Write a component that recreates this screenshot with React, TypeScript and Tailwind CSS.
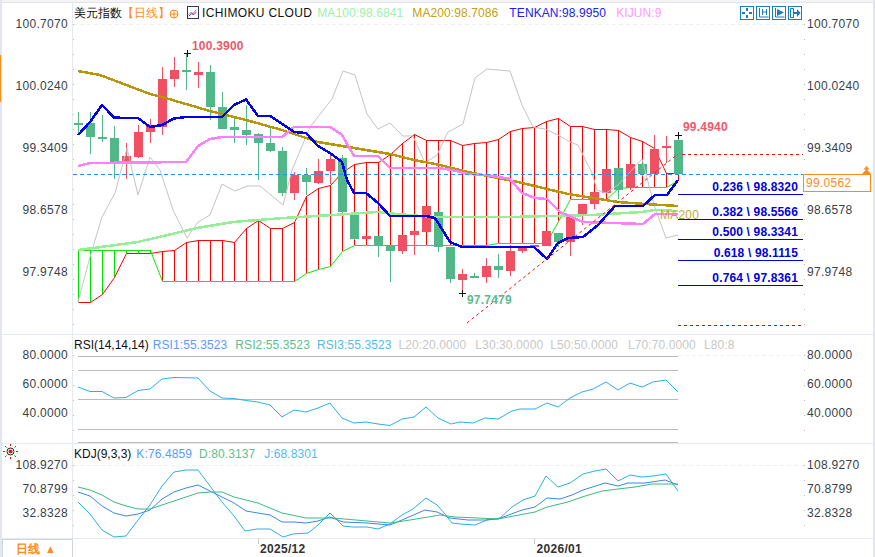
const X = (i: number) => 78.5 + 12 * i;

// [high, bodyTop, bodyBottom, low, colour]
const CANDLES: [number, number, number, number, "r" | "g"][] = [
  [112, 123, 124, 133, "g"], [112, 123, 137, 154, "g"], [115, 137, 138, 142, "g"], [126, 138, 164, 179, "g"],
  [143, 156, 164, 179, "r"], [125, 132, 157, 158, "r"], [119, 126, 132, 143, "r"], [67, 79, 127, 135, "r"],
  [57, 70, 79, 87, "r"], [53, 70, 72, 90, "g"], [62, 72, 75, 88, "r"], [65, 72, 107, 120, "g"],
  [92, 107, 129, 129, "g"], [118, 127, 130, 143, "g"], [105, 130, 135, 145, "g"], [133, 134, 143, 180, "g"],
  [128, 143, 151, 152, "g"], [147, 151, 193, 196, "g"], [172, 175, 193, 200, "r"], [168, 175, 182, 195, "g"],
  [159, 171, 183, 184, "r"], [155, 159, 171, 184, "r"], [155, 158, 212, 213, "g"], [213, 214, 239, 240, "g"],
  [236, 236, 239, 239, "r"], [236, 236, 246, 257, "g"], [246, 246, 251, 282, "g"], [235, 235, 251, 254, "r"],
  [231, 231, 235, 255, "r"], [206, 206, 232, 232, "r"], [212, 212, 247, 252, "g"], [247, 247, 279, 283, "g"],
  [269, 274, 280, 293, "r"], [273, 276, 277, 278, "g"], [258, 266, 277, 283, "r"], [254, 266, 270, 278, "g"],
  [245, 251, 271, 276, "r"], [246, 246, 251, 253, "r"], [245, 245, 247, 247, "r"], [231, 231, 246, 246, "r"],
  [233, 233, 242, 247, "g"], [217, 217, 242, 256, "r"], [204, 204, 215, 225, "r"], [192, 192, 204, 209, "r"],
  [169, 169, 193, 193, "r"], [168, 168, 190, 199, "g"], [164, 164, 188, 190, "r"], [164, 164, 174, 176, "g"],
  [135, 149, 174, 174, "r"], [136, 146, 147, 163, "r"], [134, 140, 174, 174, "g"],
];

const CLOUD_TOP = [
  302, 302, 294, 277, 253, 253, 253, 251, 250, 242, 240, 240, 240, 242, 228, 220, 228, 228, 222, 196, 188, 185, 172, 164, 162,
  162, 154, 143, 134, 140, 140, 140, 145, 143, 142, 139, 131, 128, 127, 121, 118, 126, 126, 129, 129, 130, 137, 141, 148, 173, 173,
];
const CLOUD_BOTTOM = [
  250, 250, 250, 250, 250, 250, 250, 281, 281, 281, 281, 281, 281, 281, 281, 281, 281, 281, 281, 273, 269, 266, 251, 245, 245,
  245, 245, 245, 245, 245, 245, 245, 245, 245, 245, 243, 243, 243, 243, 243, 221, 199, 199, 199, 199, 188, 187, 187, 187, 187, 180,
];

const TENKAN = "78,135 90,122 102,105 114,117.5 126,118 138,118 150,127 162,125 174,118.5 186,117 222,117 234,105 246,99.5 258,116 270,116 282,124 294,132 306,133 318,146 330,153 342,162 347,180 354,193 366,193 378,203 390,216 426,216 435,218 450,242 462,247 534,247 547,259 558,243 568,238 583,237 598,225 615,206 643,206 655,195 667,195 678,180";
const KIJUN = "78,166 90,163 186,162 198,146 210,139 222,137 282,137 294,127 330,127 342,135 354,156 378,156 390,168 438,168 452,170 468,174 487,175 510,179 522,193 535,198 547,199 560,212 583,222 643,224 655,214 678,214";
const MA200 = "78,71 100,75 150,94 162,97 210,111 246,120 282,130 318,142 354,148 390,154 414,160 440,165 468,172 518,182 568,194 618,202 645,204 678,206";
const MA100 = "78,250 138,242 197,228 233,222 283,218 333,215 377,212 408,215 435,217 510,217 592,215 642,212 655,210 678,211";
const CHIKOU = "78,302 90,257 102,217 115,193 127,148 138,195 150,157 160,170 173,210 187,238 198,222 210,215 222,184 235,191 247,186 260,186 283,205 292,170 310,127 332,99 343,71 355,75 367,114 378,129 390,123 403,136 413,136 425,163 437,155 448,132 463,124 475,78 487,69 510,71 522,105 533,127 545,129 558,135 570,142 578,145 592,173 597,190 606,193 618,185 630,172 642,159 654,205 666,238 678,235";

const RSI = "78,387 90,391.5 102,391.5 114,398 126,397.5 138,390.5 150,389 162,379 174,377.5 198,378 210,391 222,398 234,398.5 246,400.5 258,402 270,405 282,417 294,410 306,412 318,408 330,403 342,418 354,423 366,422 378,424 390,425.5 402,419 414,417 426,407 438,418 451,424 460,422 473,423 485,418 498,419 512,411 520,409 535,409 547,403 558,407 570,398 582,392 593,389 606,382 618,390 630,383 642,387 653,382 666,380 678,392";
const KDJ_J = "78,502 90,514 102,530 114,537 126,536 138,520 150,505 162,486 174,472 186,470 198,470 210,486 222,502 234,516 245,531 257,529 270,529 283,537 293,534 308,533 318,525 330,513 343,526 353,527 367,527 378,529 390,524 402,515 413,509 426,498 437,505 445,514 452,523 460,524 475,525 487,520 500,518 512,507 523,500 535,496 546,476 558,487 570,483 583,474 595,471 606,469 618,481 630,475 642,477 653,476 666,474 678,491";
const KDJ_K = "78,492 90,496 102,506 114,513 126,516 138,514 150,510 162,499 174,492 186,488 198,485 210,491 222,497 234,503 246,511 258,513 270,515 282,522 294,522 306,523 318,521 330,517 343,522 367,523 390,525 402,520 425,510 437,512 450,518 468,520 485,520 498,519 522,510 535,507 547,498 560,499 572,495 583,490 605,483 618,486 628,483 645,483 665,480 678,485";
const KDJ_D = "78,487 90,490 102,495 114,502 126,506 138,509 150,509 162,505 174,501 186,497 198,493 210,492 222,492 234,497 258,503 282,513 306,518 333,518 390,523 410,520 440,515 455,517 478,518 498,519 535,512 547,507 568,502 582,497 602,491 618,489 635,487 652,484 678,484";

const FIBS = [
  { label: "0.236 \\ 98.8320", textY: 191, lineY: 194 },
  { label: "0.382 \\ 98.5566", textY: 216, lineY: 219 },
  { label: "0.500 \\ 98.3341", textY: 236, lineY: 239 },
  { label: "0.618 \\ 98.1115", textY: 257, lineY: 260 },
  { label: "0.764 \\ 97.8361", textY: 282, lineY: 285 },
];

function PlotLine({ points, color, width = 1, jagged = false }: { points: string; color: string; width?: number; jagged?: boolean }) {
  return (
    <polyline
      points={points}
      fill="none"
      stroke={color}
      strokeWidth={width}
      strokeLinejoin="round"
      shapeRendering={jagged ? "crispEdges" : undefined}
    />
  );
}

function Cross({ x, y }: { x: number; y: number }) {
  return <path d={`M${x - 3} ${y}h7M${x + 0.5} ${y - 3}v7`} stroke="#111" shapeRendering="crispEdges" />;
}

function MainChart() {
  return (
    <svg viewBox="73 3 732 331" className="block w-[732px] h-[331px]">
      <line x1="73" x2="804" y1="24.5" y2="24.5" stroke="#eee" strokeDasharray="4 3" />
      <line x1="804.5" x2="804.5" y1="24" y2="334" stroke="#bbb" strokeDasharray="1 14" />
      <line x1="73.5" x2="73.5" y1="24" y2="334" stroke="#bbb" strokeDasharray="1 14" />

      <g shapeRendering="crispEdges">
        {CLOUD_TOP.map((top, i) => (
          <line key={i} x1={X(i)} x2={X(i)} y1={top} y2={CLOUD_BOTTOM[i]} stroke={i < 7 ? "#00e000" : "#ff0000"} />
        ))}
      </g>
      <PlotLine points={CLOUD_TOP.map((y, i) => `${X(i)},${y + 0.5}`).join(" ")} color="#ff0000" />
      <PlotLine points={CLOUD_BOTTOM.map((y, i) => `${X(i)},${y + 0.5}`).join(" ")} color="#10e810" />

      <g shapeRendering="crispEdges">
        {CANDLES.map(([high, top, bottom, low, c], i) => {
          const color = c === "r" ? "#f05062" : "#52b788";
          return (
            <g key={i}>
              <line x1={X(i)} x2={X(i)} y1={high} y2={low} stroke={color} />
              <rect x={X(i) - 4.5} y={top} width="9" height={Math.max(bottom - top, 2)} fill={color} />
            </g>
          );
        })}
      </g>

      <PlotLine points={CHIKOU} color="#c4c4c4" />
      <PlotLine points={MA100} color="#98ee98" width={2.5} jagged />
      <PlotLine points={MA200} color="#b8960c" width={2.5} jagged />
      <PlotLine points={KIJUN} color="#ff80ff" width={2.5} jagged />
      <PlotLine points={TENKAN} color="#0000ee" width={2.5} jagged />
      <line x1="467" y1="323" x2="678" y2="154" stroke="#ee1111" strokeDasharray="3 3" />

      <line x1="73" x2="803" y1="174.5" y2="174.5" stroke="#1e90ff" strokeDasharray="4 3" />
      <line x1="682" x2="803" y1="154.5" y2="154.5" stroke="#ee1111" strokeDasharray="3 3" />
      <line x1="678" x2="803" y1="325.5" y2="325.5" stroke="#cc1111" strokeDasharray="3 3" />

      <Cross x={187} y={53} />
      <Cross x={678} y={135} />
      <Cross x={462} y={293} />

      {FIBS.map((f) => (
        <g key={f.lineY}>
          <line x1="678" x2="803" y1={f.lineY + 0.5} y2={f.lineY + 0.5} stroke="#0000dd" />
          <text x="798" y={f.textY} textAnchor="end" fontSize="12" fontWeight="700" letterSpacing="0.15" fill="#0000e0">
            {f.label}
          </text>
        </g>
      ))}

      <text x="192" y="50" fontSize="12" fontWeight="700" letterSpacing="0.2" fill="#ee5a6a">100.3900</text>
      <text x="683" y="131" fontSize="12" fontWeight="700" letterSpacing="0.2" fill="#ee5a6a">99.4940</text>
      <text x="467" y="304" fontSize="12" fontWeight="700" letterSpacing="0.2" fill="#5cbb90">97.7479</text>
      <text x="660" y="219" fontSize="12" letterSpacing="0.2" fill="#c8a82c">MA200</text>
    </svg>
  );
}

function RsiChart() {
  return (
    <svg viewBox="73 335 732 108" className="block w-[732px] h-[108px]">
      {[356, 370, 399, 429, 442].map((y) => (
        <line key={y} x1="78" x2="678" y1={y + 0.5} y2={y + 0.5} stroke="#bbb" shapeRendering="crispEdges" />
      ))}
      <line x1="678" x2="804" y1="355.5" y2="355.5" stroke="#eee" strokeDasharray="4 3" />
      <line x1="804.5" x2="804.5" y1="355" y2="443" stroke="#bbb" strokeDasharray="1 14" />
      <line x1="73.5" x2="73.5" y1="355" y2="443" stroke="#bbb" strokeDasharray="1 14" />
      <PlotLine points={RSI} color="#2cb0e4" />
    </svg>
  );
}

function KdjChart() {
  return (
    <svg viewBox="73 444 732 94" className="block w-[732px] h-[94px]">
      <line x1="73" x2="804" y1="465.5" y2="465.5" stroke="#eee" strokeDasharray="4 3" />
      <line x1="804.5" x2="804.5" y1="465" y2="538" stroke="#bbb" strokeDasharray="1 14" />
      <line x1="73.5" x2="73.5" y1="465" y2="538" stroke="#bbb" strokeDasharray="1 14" />
      <PlotLine points={KDJ_J} color="#2cb0e4" />
      <PlotLine points={KDJ_K} color="#3b86f0" />
      <PlotLine points={KDJ_D} color="#3cbb80" />
    </svg>
  );
}

function AxisLabels({ labels, className }: { labels: string[]; className: string }) {
  return (
    <div className={`flex flex-col text-[12px] leading-[14px] tracking-[0.3px] text-[#3a3f4a] ${className}`}>
      {labels.map((l) => (
        <span key={l}>{l}</span>
      ))}
    </div>
  );
}

function ToolIcon({ children }: { children: React.ReactNode }) {
  return (
    <svg viewBox="0 0 12 12" className="w-[14px] h-[14px] border border-[#1a7cc4] box-border" fill="#1a7cc4" stroke="#1a7cc4" strokeWidth="1">
      {children}
    </svg>
  );
}

function Toolbar() {
  return (
    <div className="ml-auto mr-[3px] flex gap-[2px]">
      <ToolIcon>
        <path d="M5 1h2v3h-2zM5 8h2v3h-2zM1 5h3v2h-3zM8 5h3v2h-3z" stroke="none" />
      </ToolIcon>
      <ToolIcon>
        <path d="M2.5 1v9h9M5.5 2v6M9.5 2v6M5.5 5h4" fill="none" />
      </ToolIcon>
      <ToolIcon>
        <path d="M2.5 1v9h9" fill="none" />
        <path d="M4 2l7 3.5-7 3.5z" stroke="none" />
      </ToolIcon>
      <ToolIcon>
        <path d="M1.5 1.5h3v9h-3z" fill="none" />
        <path d="M5 5h3v-3l3.5 4-3.5 4v-3h-3z" stroke="none" />
      </ToolIcon>
    </div>
  );
}

function Legend({ children }: { children: React.ReactNode }) {
  return (
    <div className="absolute left-0 right-0 top-0 flex items-center h-[19px] pl-[1px] text-[12px] leading-none tracking-[0.1px] whitespace-nowrap">
      {children}
    </div>
  );
}

function MainLegend() {
  return (
    <Legend>
      <span className="text-[#111] tracking-normal">美元指数</span>
      <span className="text-[#ff8a1e] tracking-normal">【日线】</span>
      <svg viewBox="0 0 10 10" className="w-[10px] h-[10px] -ml-[1px] mt-[3px]" fill="none" stroke="#ff8a1e">
        <circle cx="5" cy="5" r="4" />
        <path d="M1 5h8M5 1v8" />
      </svg>
      <svg viewBox="0 0 12 13" className="w-[12px] h-[13px] ml-[8px] border border-[#33337a] box-border" fill="none">
        <path d="M1 9l3-3 2 2 4-5" stroke="#e03030" />
        <path d="M1 11l3-3 3 1 3-3" stroke="#2222ee" />
      </svg>
      <span className="ml-[3px] text-[#111] tracking-[0.35px]">ICHIMOKU CLOUD</span>
      <span className="ml-[5px] text-[#a0f0a8]">MA100:98.6841</span>
      <span className="ml-[9px] text-[#c8a010]">MA200:98.7086</span>
      <span className="ml-[11px] text-[#2020ff]">TENKAN:98.9950</span>
      <span className="ml-[10px] text-[#ff99ff]">KIJUN:9</span>
      <Toolbar />
    </Legend>
  );
}

export default function App() {
  return (
    <div className="w-[875px] h-[557px] overflow-hidden bg-[#e2e6ee] pl-[2px] pr-[2px] font-['Liberation_Sans',Arial,sans-serif]">
      <div className="h-[3px] bg-[#f4f4f6] border-b border-[#e4e4e8]" />
      <div className="relative bg-white h-[554px] flex flex-col">
        <div className="absolute -left-[2px] top-[52px] w-[1px] h-[47px] bg-[#ff8a1e]" />

        <div className="flex h-[332px] border-b border-[#e4eaf0]">
          <div className="w-[71px] border-r border-[#e4eaf0]">
            <AxisLabels labels={["100.7070", "100.0240", "99.3409", "98.6578", "97.9748"]} className="items-end pr-[4px] pt-[14px] gap-[48px]" />
          </div>
          <div className="relative w-[732px]">
            <MainChart />
            <MainLegend />
          </div>
          <div className="relative flex-1">
            <AxisLabels labels={["100.7070", "100.0240", "99.3409", "98.6578", "97.9748"]} className="pl-[2px] pt-[14px] gap-[48px]" />
            <div className="absolute left-[-2px] top-[171px] w-[68px] h-[18px] border border-[#ff8a1e] bg-white pl-[2px] text-[12px] leading-[16px] tracking-[0.3px] text-[#ff8a1e]">
              99.0562
            </div>
            <svg viewBox="0 0 9 8" className="absolute left-[57px] top-[163px] w-[9px] h-[8px]" fill="#ff8a1e">
              <path d="M4.5 0l3 3.5h-6zM4.5 3l4.5 5h-9z" />
            </svg>
          </div>
        </div>

        <div className="flex h-[109px] border-b border-[#e4eaf0]">
          <div className="w-[71px] border-r border-[#e4eaf0]">
            <AxisLabels labels={["80.0000", "60.0000", "40.0000"]} className="items-end pr-[4px] pt-[13px] gap-[15px]" />
          </div>
          <div className="relative w-[732px]">
            <RsiChart />
            <Legend>
              <span className="text-[#111] tracking-normal">RSI(14,14,14)</span>
              <span className="ml-[4px] text-[#5a9cf5]">RSI1:55.3523</span>
              <span className="ml-[8px] text-[#5cc08c]">RSI2:55.3523</span>
              <span className="ml-[7px] text-[#55bbe8]">RSI3:55.3523</span>
              <span className="ml-[7px] text-[#c8c8c8]">L20:20.0000</span>
              <span className="ml-[9px] text-[#c8c8c8]">L30:30.0000</span>
              <span className="ml-[7px] text-[#c8c8c8]">L50:50.0000</span>
              <span className="ml-[10px] text-[#c8c8c8]">L70:70.0000</span>
              <span className="ml-[8px] text-[#c8c8c8]">L80:8</span>
            </Legend>
          </div>
          <div className="flex-1">
            <AxisLabels labels={["80.0000", "60.0000", "40.0000"]} className="pl-[2px] pt-[13px] gap-[15px]" />
          </div>
        </div>

        <div className="flex h-[95px] border-b border-[#e4eaf0]">
          <div className="relative w-[71px] border-r border-[#e4eaf0]">
            <svg viewBox="0 0 15 15" className="absolute left-[1px] top-0 w-[15px] h-[15px]" fill="none">
              <circle cx="7.5" cy="7.5" r="3.5" stroke="#222" />
              <circle cx="7.5" cy="7.5" r="2" fill="#ee1111" />
              <path d="M7.5 0v2M7.5 13v2M0 7.5h2M13 7.5h2M2 2l1.5 1.5M11.5 11.5l1.5 1.5M2 13l1.5-1.5M11.5 3.5l1.5-1.5" stroke="#ee1111" />
            </svg>
            <AxisLabels labels={["108.9270", "70.8799", "32.8328"]} className="items-end pr-[4px] pt-[14px] gap-[10px]" />
          </div>
          <div className="relative w-[732px]">
            <KdjChart />
            <Legend>
              <span className="text-[#111] tracking-normal">KDJ(9,3,3)</span>
              <span className="ml-[5px] text-[#5a9cf5]">K:76.4859</span>
              <span className="ml-[7px] text-[#5cc08c]">D:80.3137</span>
              <span className="ml-[9px] text-[#55bbe8]">J:68.8301</span>
            </Legend>
          </div>
          <div className="flex-1">
            <AxisLabels labels={["108.9270", "70.8799", "32.8328"]} className="pl-[2px] pt-[14px] gap-[10px]" />
          </div>
        </div>

        <div className="relative flex flex-1 text-[12px] font-bold">
          <div className="flex items-center gap-[5px] w-[71px] pl-[13px] border-r border-l border-t border-[#d0d6dc] text-[#ff8a1e]">
            <span>日线</span>
            <span className="text-[11px]">▲</span>
          </div>
          <div className="flex-1 flex items-center tracking-[0.3px] text-[#333]">
            <span className="ml-[185px] border-l border-[#ccc] h-[5px] self-start" />
            <span className="ml-[1px]">2025/12</span>
            <span className="ml-[229px] border-l border-[#ccc] h-[5px] self-start" />
            <span className="ml-[1px]">2026/01</span>
          </div>
          <div className="absolute left-[610px] bottom-0 w-[148px] h-[1px] bg-[#e8e8e8]" />
        </div>
      </div>
    </div>
  );
}
